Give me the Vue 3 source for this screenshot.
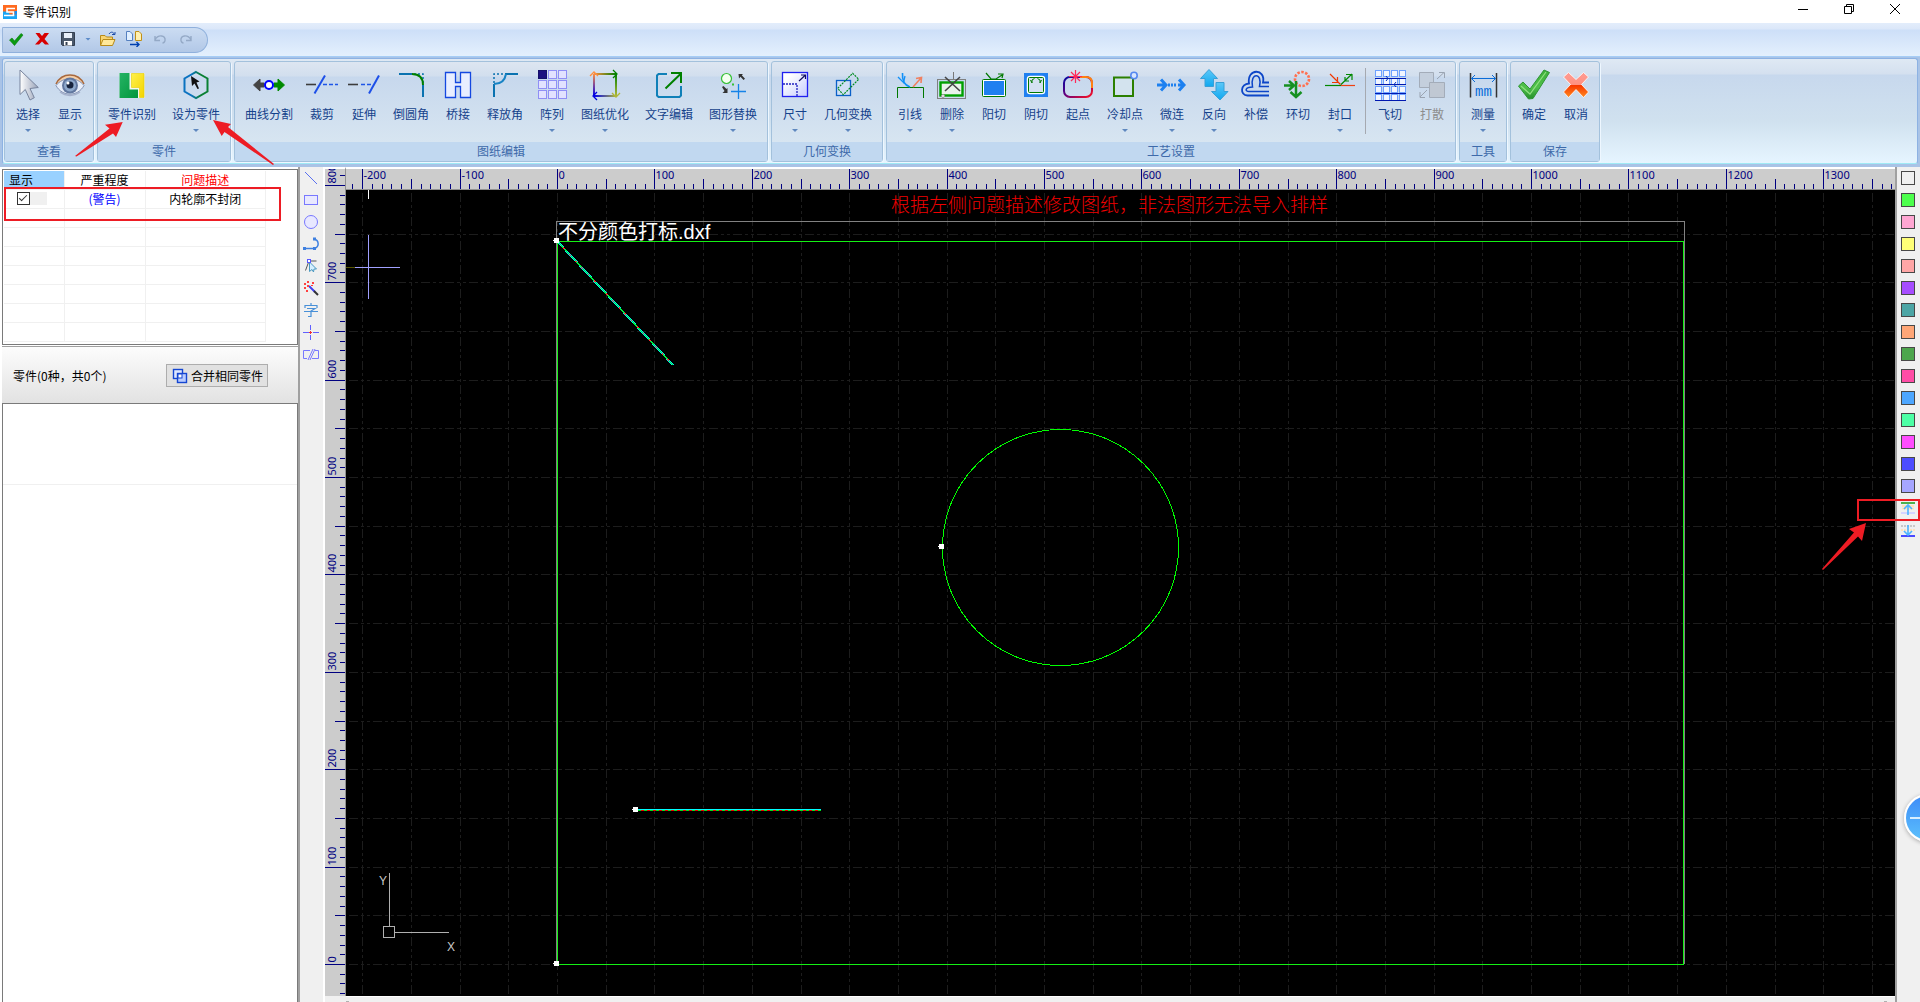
<template>
  <div class="app">
    <header class="title-bar">
      <svg class="logo" viewBox="0 0 14 14">
        <rect width="14" height="14" fill="#ff6a1f" />
        <path d="M0 6.500L5 6.500L7 9.500H14V14H0z" fill="#19a5f5" />
        <path d="M12 3.500H4V7H10.500V10.500H1" fill="none" stroke="#fff" stroke-width="1.600" />
        <path d="M11.500 6H14V9.500H11.500z" fill="#1b8df0" />
      </svg>
      <h1>零件识别</h1>
      <div class="window-buttons">
        <button aria-label="最小化">
          <svg viewBox="0 0 12 12"><path d="M1 6.500H11" /></svg>
        </button>
        <button aria-label="还原">
          <svg viewBox="0 0 12 12"><path d="M1.500 3.500H8.500V10.500H1.500zM3.500 3.500V1.500H10.500V8.500H8.500" /></svg>
        </button>
        <button aria-label="关闭">
          <svg viewBox="0 0 12 12"><path d="M1 1L11 11M11 1L1 11" /></svg>
        </button>
      </div>
    </header>

    <div class="quick-bar">
      <div class="quick-pill">
        <button
          v-for="q in quickItems"
          :key="q.name"
          :class="{ narrow: q.name === 'more' }"
          :aria-label="q.label"
        >
          <svg viewBox="0 0 16 16" v-html="q.icon"></svg>
        </button>
      </div>
    </div>

    <nav class="ribbon">
      <div class="ribbon-inner">
        <section v-for="g in groups" :key="g.title" class="group">
          <div class="group-body">
            <template v-for="b in g.items" :key="b.t">
              <span v-if="b.sep" class="separator"></span>
              <button class="tool" :class="'len' + b.t.length" :disabled="b.off">
                <svg class="tool-icon" viewBox="0 0 32 32" v-html="icons[b.t]"></svg>
                <span class="tool-label">{{ b.t }}</span>
                <i v-if="b.menu" class="caret"></i>
              </button>
            </template>
          </div>
          <h2>{{ g.title }}</h2>
        </section>
      </div>
    </nav>

    <main class="workspace">
      <aside class="side">
        <div class="issues">
          <table>
            <thead>
              <tr>
                <th class="col-show">显示</th>
                <th class="col-level">严重程度</th>
                <th class="col-desc">问题描述</th>
              </tr>
            </thead>
            <tbody>
              <tr>
                <td><span class="check-cell"><input v-model="shown" type="checkbox" aria-label="显示" /></span></td>
                <td class="level">(警告)</td>
                <td>内轮廓不封闭</td>
              </tr>
              <tr v-for="n in 7" :key="n"><td></td><td></td><td></td></tr>
            </tbody>
          </table>
        </div>
        <div class="parts-bar">
          <span>零件(0种，共0个)</span>
          <button class="merge">
            <svg viewBox="0 0 16 16">
              <rect x="1.500" y="1.500" width="9" height="9" fill="#dfe8ff" stroke="#1446d2" stroke-width="1.400" />
              <rect x="5.500" y="5.500" width="9" height="9" fill="#b9ccff" stroke="#1446d2" stroke-width="1.400" />
              <rect x="6" y="6" width="4" height="4" fill="#fff" stroke="#1446d2" />
            </svg>
            合并相同零件
          </button>
        </div>
        <div class="parts-list"><div class="parts-row"></div></div>
      </aside>

      <div class="draw-tools">
        <button v-for="d in drawTools" :key="d.label" :aria-label="d.label">
          <svg viewBox="0 0 16 16" v-html="d.icon"></svg>
        </button>
      </div>

      <svg class="ruler-v">
        <path :d="vTicks" />
        <text v-for="v in vLabels" :key="v.n" :transform="`translate(11 ${v.p - 2}) rotate(-90)`">{{ v.n }}</text>
      </svg>

      <div class="canvas-col">
        <svg class="ruler-h">
          <path :d="hTicks" />
          <text v-for="h in hLabels" :key="h.n" :x="h.p + 1" y="10">{{ h.n }}</text>
        </svg>
        <svg class="canvas">
          <path class="grid" :d="gridLines" />
          <path d="M22.500 0V9" stroke="#fff" />
          <path d="M0 77.500H9" stroke="#555500" />
          <path d="M9 77.500H54M22.500 45V109" stroke="#a0a0ff" />
          <text class="hint" x="545" y="22">根据左侧问题描述修改图纸，非法图形无法导入排样</text>
          <g class="drawing" transform="translate(211 774)">
            <path d="M-.5 .5V-742.500H1127.500V0" stroke="#828282" />
            <path d="M.5 .5V-722.500H1126.500V-.5M0 .5H1127" stroke="#14f014" />
            <text class="file-name" x="1" y="-725">不分颜色打标.dxf</text>
            <circle cx="503.500" cy="-416.500" r="118" stroke="#0f0" />
            <path d="M0 -723L116 -599" stroke="#00e8e8" stroke-width="2" />
            <path d="M0 -723L116 -599" stroke="#00f040" />
            <path d="M0 -723L116 -599" stroke="#ff3030" stroke-dasharray="2 7" />
            <path d="M78 -154.500H264" stroke="#00ffff" />
            <path d="M78 -153.500H264" stroke="#00e020" />
            <path d="M78 -153.500H264" stroke="#f00000" stroke-dasharray="3 3" />
            <g fill="#fff">
              <circle cx="-.5" cy="-723.500" r="3" />
              <circle cx="-.5" cy="-.5" r="3" />
              <circle cx="78.500" cy="-154.500" r="3" />
              <circle cx="384.500" cy="-417.500" r="3" />
            </g>
          </g>
          <g class="axes">
            <rect x="37.500" y="736.500" width="11" height="11" />
            <path d="M43.500 683V737M49 742.500H103" />
            <text x="33" y="695">Y</text>
            <text x="101" y="761">X</text>
          </g>
        </svg>
        <div class="scroll-strip"><i></i><i></i></div>
      </div>

      <div class="palette">
        <button
          v-for="c in colors"
          :key="c"
          class="swatch"
          :style="{ background: c }"
          :aria-label="c"
        ></button>
        <button class="move" aria-label="置顶">
          <svg viewBox="0 0 16 16">
            <path d="M2 5h12M2 7.500h12" stroke="#ffe3bd" stroke-width="2" />
            <path d="M1 12h14" stroke="#d4d4ff" stroke-width="2" />
            <path d="M1 2h14" stroke="#4fb04f" stroke-width="2" />
            <path d="M8 14V4M4 8L8 4L12 8" fill="none" stroke="#4db5ff" stroke-width="1.600" />
          </svg>
        </button>
        <button class="move" aria-label="置底">
          <svg viewBox="0 0 16 16">
            <path d="M1 3h14" stroke="#c8c8c8" stroke-width="2" stroke-dasharray="2 1" />
            <path d="M1 7h14" stroke="#ffe3bd" stroke-width="2" stroke-dasharray="2 1" />
            <path d="M1 13h14" stroke="#4a4aff" stroke-width="2" />
            <path d="M8 2V12M4 8L8 12L12 8" fill="none" stroke="#4db5ff" stroke-width="1.600" />
          </svg>
        </button>
      </div>
    </main>

    <svg class="marks">
      <rect x="5" y="188" width="275" height="32" fill="none" stroke="#ed1c24" stroke-width="2" />
      <path d="M122.700 122L105 124.700L109.500 128.500L75 156L76.500 156.500L113 133.500L116 137z" />
      <path d="M213 120L231 124L228 127L274 164L273 165L224.500 132L221.700 136z" />
    </svg>
    <svg class="marks-right" viewBox="0 0 100 80">
      <rect x="38" y="10" width="61" height="20" fill="none" stroke="#ed1c24" stroke-width="2" />
      <path d="M46 33L29 39L34 42.500L2 79L3 80L38 46.500L42 51z" />
    </svg>
    <button class="bubble" aria-label="展开"></button>
  </div>
</template>

<script setup>
import { ref } from 'vue'

const shown = ref(true)

const groups = [
  { title: '查看', items: [{ t: '选择', menu: true }, { t: '显示', menu: true }] },
  { title: '零件', items: [{ t: '零件识别' }, { t: '设为零件', menu: true }] },
  {
    title: '图纸编辑',
    items: [
      { t: '曲线分割' }, { t: '裁剪' }, { t: '延伸' }, { t: '倒圆角' }, { t: '桥接' }, { t: '释放角' },
      { t: '阵列', menu: true }, { t: '图纸优化', menu: true }, { t: '文字编辑' }, { t: '图形替换', menu: true }
    ]
  },
  { title: '几何变换', items: [{ t: '尺寸', menu: true }, { t: '几何变换', menu: true }] },
  {
    title: '工艺设置',
    items: [
      { t: '引线', menu: true }, { t: '删除', menu: true }, { t: '阳切' }, { t: '阴切' }, { t: '起点' },
      { t: '冷却点', menu: true }, { t: '微连', menu: true }, { t: '反向', menu: true }, { t: '补偿' },
      { t: '环切' }, { t: '封口', menu: true }, { t: '飞切', menu: true, sep: true }, { t: '打散', off: true }
    ]
  },
  { title: '工具', items: [{ t: '测量', menu: true }] },
  { title: '保存', items: [{ t: '确定' }, { t: '取消' }] }
]

// cells of the array icon, 3 x 3
let arrayCells = ''
for (let i = 0; i < 9; i++) {
  const x = 2.5 + (i % 3) * 10
  const y = 1.5 + Math.floor(i / 3) * 10
  arrayCells += `<rect x="${x}" y="${y}" width="8" height="8" fill="${i ? '#e2e2ff' : '#1c1080'}" stroke="${i ? '#8f8ff5' : '#15106a'}"/>`
}

// cells of the fly-cut icon, 4 x 4
let flyCells = ''
for (let i = 0; i < 16; i++) {
  const x = 1.5 + (i % 4) * 8
  const y = 1.5 + Math.floor(i / 4) * 8
  flyCells += `<rect x="${x}" y="${y}" width="6" height="6" fill="#f2f6ff" stroke="#6ea2ff"/>`
}

const icons = {
  选择: '<defs><linearGradient id="cur"><stop offset="0" stop-color="#fff"/><stop offset="1" stop-color="#98a2b8"/></linearGradient></defs><path d="M8 1V25.500L13.300 20.500L18 31L22.300 28.700L18 19.500L26.300 18.500z" fill="url(#cur)" stroke="#77839c"/>',
  显示: '<path d="M2 15C8 3 24 3 30 15" fill="#f5cfa8" stroke="#a8683c" stroke-width="1.500"/><path d="M2 16.500C9 7.500 23 7.500 30 16.500C24 28 8 28 2 16.500z" fill="#e8eefa" stroke="#8292b2"/><circle cx="16" cy="16.500" r="8" fill="#61779f"/><circle cx="16" cy="16.500" r="6" fill="#8ea8cb"/><circle cx="16" cy="16" r="3.500" fill="#17233d"/><circle cx="14" cy="14" r="1.500" fill="#fff"/><path d="M6 23C12 27.500 20 27.500 26 23" fill="none" stroke="#a5b0cb" stroke-width="1.500"/>',
  零件识别: '<defs><linearGradient id="grn" x2="1" y2="1"><stop offset="0" stop-color="#25b364"/><stop offset="1" stop-color="#00963c"/></linearGradient><linearGradient id="yel" y2="1"><stop offset="0" stop-color="#fff04a"/><stop offset="1" stop-color="#f3d400"/></linearGradient></defs><path d="M3.500 4H28.500V29H3.500z" fill="#f4f8ee"/><path d="M3.500 4H13.500V20.500H22V29H3.500z" fill="url(#grn)"/><path d="M15.500 4.500H28V28.500H23.500V18.500H15.500z" fill="url(#yel)" stroke="#e5cf00" stroke-width=".6"/>',
  设为零件: '<defs><linearGradient id="hex"><stop offset=".3" stop-color="#0a72c0"/><stop offset=".7" stop-color="#0a8032"/></linearGradient></defs><path d="M16 3L27.500 9.500V22.500L16 29L4.500 22.500V9.500z" fill="none" stroke="url(#hex)" stroke-width="2"/><path d="M11 7L12 17L14.500 14.500L17.500 20L19 19.500L16.500 13.500L19.500 12.500z" fill="#111"/>',
  曲线分割: '<path d="M7 10L.500 16L7 22V18H11V14H7z" fill="#454545" stroke="#454545" stroke-linejoin="round"/><path d="M25 10L31.500 16L25 22V18H21V14H25z" fill="#008a00" stroke="#008a00" stroke-linejoin="round"/><circle cx="16" cy="16" r="4" fill="#fff" stroke="#00f" stroke-width="2"/>',
  裁剪: '<path d="M0 15.500H10" stroke="#3c3c3c" stroke-width="1.600"/><path d="M17 15.500H32" stroke="#1d55e8" stroke-width="1.600" stroke-dasharray="4 2"/><path d="M19 6.500L8.500 24.500" stroke="#1d4fe8" stroke-width="2"/>',
  延伸: '<path d="M0 15.500H10" stroke="#3c3c3c" stroke-width="1.600"/><path d="M13 15.500H24" stroke="#1d55e8" stroke-width="1.600" stroke-dasharray="4 2"/><path d="M31 6.500L21 24.500" stroke="#1d4fe8" stroke-width="2"/>',
  倒圆角: '<path d="M4 5H17M28 16V28" stroke="#0a72b0" stroke-width="2"/><path d="M19 5H28V15" fill="none" stroke="#0a72b0" stroke-width="1.500" stroke-dasharray="2 2"/><path d="M17 5C24 5 28 9 28 16" fill="none" stroke="#008000" stroke-width="2"/>',
  桥接: '<path d="M3.500 3.500H13.500V13.500H18.500V3.500H28.500V28.500H18.500V17.500H13.500V28.500H3.500z" fill="#e8eeff" stroke="#1448e0" stroke-width="1.300"/>',
  释放角: '<path d="M16 5H29M5 15V28" stroke="#0a72b0" stroke-width="2"/><path d="M5 14V5H16" fill="none" stroke="#0a72b0" stroke-width="1.500" stroke-dasharray="2 2"/><path d="M17 5C16 11 12 15 5 15" fill="none" stroke="#1783c4" stroke-width="2"/>',
  阵列: arrayCells,
  图纸优化: '<defs><linearGradient id="oa"><stop offset="0" stop-color="#ff9040"/><stop offset="1" stop-color="#008000"/></linearGradient><linearGradient id="ob" x2="0" y2="1"><stop offset="0" stop-color="#008000"/><stop offset="1" stop-color="#b0b838"/></linearGradient><linearGradient id="oc"><stop offset="0" stop-color="#0000f0"/><stop offset="1" stop-color="#b0b838"/></linearGradient><linearGradient id="od" x2="0" y2="1"><stop offset="0" stop-color="#ff9040"/><stop offset="1" stop-color="#0000f0"/></linearGradient></defs><rect x="5" y="4" width="22" height="2" fill="url(#oa)"/><rect x="26" y="5" width="2" height="22" fill="url(#ob)"/><rect x="5" y="26" width="22" height="2" fill="url(#oc)"/><rect x="4" y="5" width="2" height="22" fill="url(#od)"/><g fill="none" stroke-width="1.300"><path d="M1 7L5 3L9 7" stroke="#ff9040"/><path d="M24 1L28 5L24 9" stroke="#008000"/><path d="M23 24L27 28L31 24" stroke="#b0b838"/><path d="M8 23L4 27L8 31" stroke="#0000e0"/></g>',
  文字编辑: '<path d="M14 5H5.500L4 6.500V26.500L5.500 28H26.500L28 26.500V17" fill="none" stroke="#1080b8" stroke-width="2"/><path d="M12.500 19.500L28 4.500M18 4H28V14" fill="none" stroke="#008000" stroke-width="2"/>',
  图形替换: '<circle cx="9.500" cy="9.500" r="5" fill="#f4fff0" stroke="#35c035" stroke-width="1.200"/><path d="M21.500 5H26L24.800 6.300L28 9.700L26.500 11L23.500 7.700L22 9.500z" fill="#333"/><path d="M5 18L6.500 17L9.500 20L10.500 19V24H5.500L7.500 22z" fill="#333"/><path d="M14 22.500H29M21.500 15V30" stroke="#1583e8" stroke-width="1.300"/><path d="M15 14.500h2v2h-2z" fill="#35c035"/>',
  尺寸: '<defs><linearGradient id="dim" x2="1" y2="1"><stop offset=".2" stop-color="#fff"/><stop offset="1" stop-color="#c5ccff"/></linearGradient></defs><rect x="3.500" y="3.500" width="25" height="24" fill="url(#dim)" stroke="#2020f0" stroke-width="1.300"/><path d="M4 15H18V27" fill="none" stroke="#2020c0" stroke-width="1.300" stroke-dasharray="2 1"/><path d="M20 12L26.500 6M22 6H26.500V10" fill="none" stroke="#101060" stroke-width="1.200"/>',
  几何变换: '<rect x="4.500" y="11.500" width="14" height="15" fill="#cfe0f5" stroke="#0a60c8" stroke-width="1.300"/><path d="M5.700 19.300L20.700 4.300L26.700 10.300L11.300 25.700z" fill="none" stroke="#008a20" stroke-width="1.200" stroke-dasharray="2 1"/>',
  引线: '<path d="M3.500 29V18.500H29.500V29" fill="none" stroke="#007800"/><path d="M8.500 4C8 11 10 16 16 18" fill="none" stroke="#1090f8" stroke-width="1.600"/><path d="M4 8L9.500 13.500L11 7" fill="none" stroke="#1090f8" stroke-width="1.300"/><path d="M19 18L27 9M22 9.500L27.500 8.500L27 14" fill="none" stroke="#f08060" stroke-width="1.600"/>',
  删除: '<rect x="1.500" y="10.500" width="28" height="19" fill="none" stroke="#808080"/><rect x="4.500" y="13.500" width="22" height="13" fill="#e9f3ea" stroke="#00a000" stroke-width="2.400"/><path d="M9 8L24 22M24 8L9 22" stroke="#444" stroke-width="1.600"/><path d="M17.500 3V10" stroke="#777"/><circle cx="7" cy="27" r="1.500" fill="#fff" stroke="#999"/>',
  阳切: '<rect x="4.500" y="10.500" width="23" height="17" rx="1" fill="#fff" stroke="#007800"/><rect x="6" y="12" width="20" height="14" fill="#2080f0"/><path d="M8 4L13 10H18L24 6M20 5L25 5L24 9" fill="none" stroke="#007800" stroke-width="1.200"/>',
  阴切: '<rect x="4" y="4" width="24" height="24" fill="#2080f0"/><rect x="8" y="8" width="16" height="16" rx="2" fill="#d4e1f2" stroke="#fff" stroke-width="2.500"/><rect x="8.500" y="8.500" width="15" height="15" rx="1" fill="#d4e1f2" stroke="#007800"/><path d="M12 14V11L14.500 9.500M17.500 9.500L20 11V14M10.500 11L12 14M21.500 11L20 14" fill="none" stroke="#007800"/>',
  起点: '<defs><linearGradient id="sta" x2="1" y2="1"><stop offset="0" stop-color="#0808a0"/><stop offset=".45" stop-color="#600080"/><stop offset="1" stop-color="#ff1020"/></linearGradient></defs><rect x="2" y="8" width="28" height="20" rx="6" fill="none" stroke="url(#sta)" stroke-width="2"/><path d="M18 8H24Q30 8 30 14V19" fill="none" stroke="#ff8010" stroke-width="2"/><path d="M13.500 1V14M7 7.500H20M9 3L18 12M18 3L9 12" stroke="#ff2858" stroke-width="1.200"/>',
  冷却点: '<rect x="5" y="8.500" width="19" height="18.500" fill="#d3e3ee" stroke="#2c8000" stroke-width="2"/><circle cx="25" cy="6.500" r="3.200" fill="#d8e6ff" stroke="#5588f0" stroke-width="1.600"/>',
  微连: '<path d="M1 16H9M5 10.500L10 16L5 21.500" fill="none" stroke="#1c80f0" stroke-width="3"/><path d="M12 16H21" stroke="#1c80f0" stroke-width="3" stroke-dasharray="2 1"/><path d="M22 16H28M23 10.500L28 16L23 21.500" fill="none" stroke="#1c80f0" stroke-width="3"/>',
  反向: '<defs><linearGradient id="rev" y2="1" x2="0"><stop offset="0" stop-color="#5cc8f8"/><stop offset="1" stop-color="#10a8f0"/></linearGradient></defs><path d="M11 .5L19.500 9.500H15.500V17.500H7V9.500H2.500z" fill="url(#rev)" stroke="#38a0d8"/><path d="M22 31L30 22.500H26V13.500H18V22.500H13.500z" fill="url(#rev)" stroke="#38a0d8"/>',
  补偿: '<path d="M29 26.500H7.500C-.5 26 .5 15 9 14.500C6.500 -1 26 -1 23 13.500H29" fill="none" stroke="#0d46c8" stroke-width="1.800"/><path d="M29 22.500H9C4.500 22.500 5 18 12.500 18C9.500 3 23 3 19.500 17.500H29" fill="none" stroke="#0d46c8" stroke-width="1.500"/>',
  环切: '<circle cx="20" cy="10" r="7" fill="none" stroke="#ff7050" stroke-width="2.600" stroke-dasharray="2.500 1.500"/><path d="M2 16.500H11M7 12L12 16.500L7 21" fill="none" stroke="#159020" stroke-width="2.500"/><path d="M14 12V28M8.500 23L14 28L19.500 23" fill="none" stroke="#159020" stroke-width="2.500"/>',
  封口: '<path d="M1 16.500H17" stroke="#008800" stroke-width="1.200"/><path d="M17 16.500H31" stroke="#f04010" stroke-width="1.200"/><path d="M6 5L16.500 15.500M8 13.500H13.500V8" fill="none" stroke="#f03800" stroke-width="1.200"/><path d="M17 15.500L28 5M22 5.500H28V11M21 8L21 12L25 12" fill="none" stroke="#008800" stroke-width="1.200"/>',
  飞切: flyCells + '<path d="M1 9.500H32M1 15.500H32M1 24.500H32M1 31.500H32" stroke="#0018b0"/><path d="M12 7L14 9.500L12 12M22 13L20 15.500L22 18" fill="none" stroke="#0030c0"/>',
  打散: '<path d="M3.500 3.500H17.500V18.500H3.500z" fill="#c4cfdd" stroke="#a3acb9"/><path d="M13.500 13.500H28.500V28.500H13.500z" fill="#c0c8d3" stroke="#a3acb9"/><path d="M21 10L28 3.500M23 3.500H28.500V9M11 21L4 28M4 23V28.500H9" fill="none" stroke="#9aa4b2"/>',
  测量: '<path d="M3.500 4V28.500M29.500 4V28.500" stroke="#333" stroke-width="1.500"/><path d="M4.500 9.500H28.500M8 6L4.500 9.500L8 13M25 6L28.500 9.500L25 13" fill="none" stroke="#0a6cd8"/><text x="8" y="27" font-family="Liberation Mono, monospace" font-size="14" fill="#0a6cd8">mm</text>',
  确定: '<defs><linearGradient id="okg" y2="1" x2="0"><stop offset="0" stop-color="#3fae3a"/><stop offset=".6" stop-color="#4fc04a"/><stop offset="1" stop-color="#26902c"/></linearGradient></defs><path d="M.5 17L5 13L12 20L26 1L31.500 3.500L15 29.500L10.500 30z" fill="url(#okg)" stroke="#2f9634" stroke-linejoin="round"/><path d="M3 17L12 25L28 3" fill="none" stroke="#90e080" stroke-width="1.200"/>',
  取消: '<defs><linearGradient id="nog" y2="1" x2="0"><stop offset=".1" stop-color="#ff9a90"/><stop offset=".48" stop-color="#ff9080"/><stop offset=".52" stop-color="#f83800"/><stop offset="1" stop-color="#ff8a20"/></linearGradient></defs><path d="M3.500 8L8.500 3.500L16 10.500L23.500 3.500L28.500 8L21.500 15.500L28.500 23L23.500 28.500L16 20.500L8.500 28.500L3.500 23L10.500 15.500z" fill="url(#nog)" stroke="#fff" stroke-width=".8"/>'
}

const quickItems = [
  { name: 'ok', label: '确定', icon: '<path d="M1.500 9L4 7L6.500 10L13 2.500L15 4L6.500 14.500z" fill="#0a9a10" stroke="#087a0c" stroke-width=".6"/>' },
  { name: 'no', label: '取消', icon: '<path d="M1.500 2H5.500L8 5L10.500 2H15L10.500 8L15 13.500H11L8 10.500L5 13.500H1L6 8z" fill="#d80000"/>' },
  { name: 'save', label: '保存', icon: '<path d="M1.500 1.500H14.500V14.500H2.500L1.500 13.500z" fill="#4a586b" stroke="#333f50"/><path d="M4 2H12V7H4z" fill="#e8f0fa"/><path d="M4 10H12V14.500H4z" fill="#fff"/><path d="M5.500 11H7.500V14H5.500z" fill="#333f50"/>' },
  { name: 'more', label: '更多', icon: '<path d="M3 6H13L8 11z" fill="#5b8ac8"/>' },
  { name: 'open', label: '打开', icon: '<path d="M.5 14V4.500H5L6.500 6H12.500V8" fill="#f8d470" stroke="#b88a18"/><path d="M.5 14.500L3 8.500H15L12.500 14.500z" fill="#ffe89a" stroke="#b88a18"/><path d="M9 3C11 0 14 1 14.500 4M12 3.500H15V1" fill="none" stroke="#1a4aa8"/>' },
  { name: 'convert', label: '转换', icon: '<path d="M.5 .5H4L6.500 3V9.500H.5z" fill="#e0efff" stroke="#5580c0"/><path d="M9.500 .5H13L15.500 3V9.500H9.500z" fill="#fff0b0" stroke="#c09018"/><path d="M4 13.500H13M10.500 11L13 13.500L10.500 16" fill="none" stroke="#0040b0" stroke-width="1.400"/>' },
  { name: 'undo', label: '撤销', icon: '<path d="M3 9C6 3 14 4 13 9.500C12.500 11.500 11 12 10.500 12M3 5V9.500H8" fill="none" stroke="#94a9c6" stroke-width="1.400"/>' },
  { name: 'redo', label: '重做', icon: '<path d="M13 9C10 3 2 4 3 9.500C3.500 11.500 5 12 5.500 12M13 5V9.500H8" fill="none" stroke="#94a9c6" stroke-width="1.400"/>' }
]

const drawTools = [
  { label: '直线', icon: '<path d="M2 2L14 14" stroke="#5a70f0"/>' },
  { label: '矩形', icon: '<rect x="1.500" y="3.500" width="13" height="9" fill="#e8e8ff" stroke="#7878ff"/>' },
  { label: '圆', icon: '<circle cx="8" cy="8" r="6.500" fill="#e8e8ff" stroke="#7878ff"/>' },
  { label: '多段线', icon: '<path d="M1 12.500H11C17 11 16 4 11 3" fill="none" stroke="#3f80e0" stroke-width="1.500"/><path d="M0 11h3v3H0zM10 1.500h3v3h-3zM10 11h3v3h-3z" fill="#3f80e0"/>' },
  { label: '节点', icon: '<path d="M2.500 12.500L6 3H13.500" fill="none" stroke="#555"/><path d="M6.500 4V13.500L9 11.500L10.500 14L11 11H13.500z" fill="#d5efff" stroke="#4a98c0"/><rect x="4.500" y="1.500" width="3" height="3" fill="#fff" stroke="#5858ff"/>' },
  { label: '魔棒', icon: '<path d="M6 6L12 12" stroke="#4040f0" stroke-width="2"/><path d="M11 11L15 15" stroke="#333" stroke-width="2"/><path d="M1 3h2v2H1zM4 1h2v2H4zM9 2h2v2H9zM1 7h2v2H1zM3 10h2v2H3zM8 5h2v1H8zM4 5h2v2H4z" fill="#ff4040"/>' },
  { label: '文字', icon: '<path d="M8 1V3M2 6V3.500H14V6M4 6.500H12L8 9V14.500H5M1 9.500H15" fill="none" stroke="#4890d8" stroke-width="1.200"/>' },
  { label: '点', icon: '<path d="M0 8.500H6M10 8.500H16M7.500 1V6M7.500 11V16" stroke="#6060ff"/><path d="M6 8.500H9M7.500 7V10" stroke="#f03030"/>' },
  { label: '打断', icon: '<path d="M7 4.500H.5V12.500H4M9 12.500H15.500V4.500H12M5 14L10 3M7 14L12 3" fill="none" stroke="#7878ff"/>' }
]

const colors = [
  '#f0f0f0', '#4dff4d', '#ffa6d2', '#ffff77', '#ffa6a6', '#a64dff', '#4da6a6', '#ffa677',
  '#4da64d', '#ff4da6', '#4da6ff', '#4dffa6', '#ff4dff', '#4d4dff', '#a6a6ff'
]

// ruler scale: pixels per millimetre, and where zero lies on each ruler
const scale = 0.974
const zeroX = 211
const zeroY = 774
const rulerH = 21

// space left for the drawing next to the panels and below the ribbon
const viewW = window.innerWidth - 371
const viewH = window.innerHeight - 196

const toX = (v) => Math.round(zeroX + v * scale) + 0.5
const toY = (v) => Math.round(zeroY - v * scale) + 0.5

function tickLength(v) {
  if (v % 100 === 0) return 20
  return v % 50 === 0 ? 10 : 5
}

let hTicks = ''
let vTicks = ''
let gridLines = ''
const hLabels = []
const vLabels = []

for (let v = -210; toX(v) < viewW; v += 10) {
  hTicks += `M${toX(v)} 20V${20 - tickLength(v)}`
  if (v % 100 === 0 && toX(v) < viewW - 32) hLabels.push({ n: v, p: toX(v) })
  if (v % 50 === 0) gridLines += `M${toX(v)} 3V${viewH}`
}
for (let v = 810; toY(v) < viewH; v -= 10) {
  const y = toY(v) + rulerH
  vTicks += `M20 ${y}H${20 - tickLength(v)}`
  if (v % 100 === 0) vLabels.push({ n: v, p: y })
  if (v % 50 === 0) gridLines += `M3 ${toY(v)}H${viewW}`
}
</script>

<style>
body {
  overflow: hidden;
}
</style>

<style scoped>
.app {
  position: relative;
  display: flex;
  flex-direction: column;
  height: 100vh;
  overflow: hidden;
  background: #fff;
  font-family: "Noto Sans CJK SC", sans-serif;
  font-size: 12px;
  line-height: 16px;
  color: #000;
}

button {
  padding: 0;
  border: none;
  background: transparent;
  font: inherit;
  color: inherit;
}

h1,
h2 {
  margin: 0;
  font-size: 12px;
  font-weight: normal;
}

.title-bar {
  display: flex;
  align-items: center;
  gap: 6px;
  height: 23px;
  padding: 0 2px 0 3px;
}

.logo {
  width: 14px;
  height: 14px;
}

.window-buttons {
  display: flex;
  margin-left: auto;
}

.window-buttons button {
  width: 46px;
  height: 23px;
  padding-bottom: 3px;
}

.window-buttons svg {
  width: 12px;
  height: 12px;
  fill: none;
  stroke: #000;
}

/* quick access */
.quick-bar {
  height: 33px;
  flex: none;
  box-sizing: border-box;
  padding: 4px 2px;
  background: linear-gradient(#e3edfb 0, #dbe7f9 6px, #cddff8 7px, #e4f0fd 100%);
}

.quick-pill {
  display: inline-flex;
  align-items: center;
  box-sizing: border-box;
  height: 26px;
  padding-right: 8px;
  border: 1px solid #8fb0dc;
  border-left-color: #9ab6dc;
  border-radius: 0 13px 13px 0;
  background: linear-gradient(#cbdcf2, #b2c8e7);
}

.quick-pill button {
  width: 26px;
  height: 20px;
}

.quick-pill .narrow {
  width: 14px;
}

.quick-pill svg {
  width: 16px;
  height: 16px;
}

.quick-pill .narrow svg {
  width: 8px;
}

/* ribbon */
.ribbon {
  flex: none;
  padding: 1px 2px 3px;
  border-top: 1px solid #a6cdf6;
  background: #a9c3e6;
}

.ribbon-inner {
  display: flex;
  gap: 3px;
  box-sizing: border-box;
  height: 106px;
  padding: 2px 1px 1px;
  border: 1px solid #8db2e3;
  border-bottom-color: #9feaf5;
  border-radius: 3px;
  background: linear-gradient(#dfe9f4 0, #d4e0ef 15px, #c7d8ed 16px, #d0e1ef 60%, #e6f5ff 100%);
}

.group {
  display: flex;
  flex-direction: column;
  box-sizing: border-box;
  border: 1px solid #a3c1dc;
  border-radius: 3px;
  box-shadow: 1px 1px 0 #eef7ff;
  background: linear-gradient(#dde6f1 0, #d2dfee 14px, #c7d8ed 15px, #d7e5f1 80px);
}

.group h2 {
  height: 19px;
  line-height: 18px;
  text-align: center;
  color: #3e6aaa;
  background: #c1d8f0;
}

.group-body {
  display: flex;
  flex: 1;
  padding: 0 2px;
}

.tool {
  display: flex;
  flex-direction: column;
  align-items: center;
  padding-top: 7px;
  width: 42px;
  color: #15428b;
}

.tool.len3 {
  width: 52px;
}

.tool.len4 {
  width: 64px;
}

.tool:disabled {
  color: #8d8d8d;
}

.tool-icon {
  width: 32px;
  height: 32px;
  margin-bottom: 5px;
  overflow: visible;
}

.tool-label {
  white-space: nowrap;
}

.caret {
  margin-top: 7px;
  border: 3px solid transparent;
  border-top-color: #5f88bf;
  border-bottom: none;
}

.separator {
  width: 1px;
  height: 66px;
  margin: 6px 3px 0 4px;
  background: #a5a9b0;
}

/* left panel */
.workspace {
  display: flex;
  flex: 1;
  min-height: 0;
  background: #f0f0f0;
}

.side {
  display: flex;
  flex-direction: column;
  flex: none;
  box-sizing: border-box;
  width: 300px;
  border-right: 2px solid #a0a0a0;
  padding: 2px 0 0 2px;
  background: #fff;
}

.issues {
  box-sizing: border-box;
  height: 176px;
  padding: 1px;
  border: 1px solid #7a7a7a;
}

table {
  width: 262px;
  border-collapse: collapse;
  table-layout: fixed;
  text-align: center;
}

th,
td {
  box-sizing: border-box;
  height: 19px;
  padding: 0;
  border-right: 1px solid #f0f0f0;
  border-bottom: 1px solid #f0f0f0;
  font-weight: normal;
}

th {
  height: 18px;
}

.col-show {
  width: 60px;
  padding-left: 5px;
  text-align: left;
  background: #99d1ff;
}

.col-level {
  width: 81px;
}

.col-desc {
  color: #f00;
}

.level {
  color: #00f;
}

.check-cell {
  display: block;
  width: 30px;
  height: 13px;
  margin-left: 13px;
  background: #f0f0f0;
}

input[type="checkbox"] {
  appearance: none;
  display: block;
  box-sizing: border-box;
  width: 13px;
  height: 13px;
  margin: 0;
  border: 1px solid #333;
  background: #fff;
}

input[type="checkbox"]:checked::before {
  content: "";
  display: block;
  width: 7px;
  height: 3px;
  margin: 2px 0 0 1px;
  border: solid #333;
  border-width: 0 0 1px 1px;
  transform: rotate(-45deg);
}

.parts-bar {
  display: flex;
  align-items: center;
  justify-content: space-between;
  box-sizing: border-box;
  height: 58px;
  padding: 2px 30px 0 11px;
  border-top: 1px solid #fff;
  box-shadow: inset 0 1px 0 #a0a0a0;
  background: linear-gradient(#fdfdfd, #e2e2e2);
}

.merge {
  display: flex;
  align-items: center;
  gap: 3px;
  height: 23px;
  padding: 0 4px 0 5px;
  border: 1px solid #adadad;
  background: #e1e1e1;
  white-space: nowrap;
}

.merge svg {
  width: 16px;
  height: 16px;
}

.parts-list {
  flex: 1;
  border: 1px solid #7a7a7a;
  border-bottom: none;
}

.parts-row {
  height: 80px;
  border-bottom: 1px solid #f0f0f0;
}

/* drawing tools */
.draw-tools {
  flex: none;
  width: 23px;
  border-right: 2px solid #fff;
}

.draw-tools button {
  display: block;
  width: 22px;
  height: 22px;
}

.draw-tools svg {
  display: block;
  width: 16px;
  height: 16px;
  margin: 0 auto;
}

.ruler-v,
.ruler-h {
  flex: none;
  border-top: 2px solid #fff;
  background: #cccccc;
  font-family: "Noto Sans", sans-serif;
  font-size: 11px;
  fill: #000080;
}

.ruler-v path,
.ruler-h path {
  stroke: #000080;
}

.ruler-v {
  box-sizing: border-box;
  width: 21px;
  height: calc(100% - 6px);
  border-right: 1px solid #909090;
}

.ruler-h {
  width: 100%;
  height: 20px;
  border-bottom: 1px solid #909090;
}

.canvas-col {
  display: flex;
  flex-direction: column;
  flex: 1;
  min-width: 0;
}

.canvas {
  flex: 1;
  width: 100%;
  min-height: 0;
  background: #000;
}

.grid {
  fill: none;
  stroke: #1d1d1d;
  stroke-dasharray: 9 3 3 3 3 3;
}

.hint {
  font-size: 19px;
  font-weight: 300;
  fill: #f00000;
}

.drawing {
  fill: none;
  shape-rendering: crispEdges;
}

.file-name {
  font-family: "Liberation Sans", "Noto Sans CJK SC", sans-serif;
  font-size: 20px;
  fill: #fff;
}

.axes {
  fill: none;
  stroke: #b0b0b0;
}

.axes text {
  font-family: "Liberation Sans", sans-serif;
  font-size: 12px;
  fill: #c8c8c8;
  stroke: none;
}

.scroll-strip {
  display: flex;
  justify-content: space-between;
  align-items: flex-end;
  flex: none;
  box-sizing: border-box;
  height: 6px;
  padding: 0 8px 0 0;
  border-top: 1px solid #fff;
}

.scroll-strip i {
  width: 3px;
  height: 1px;
  background: #b0b0b0;
}

/* layer colours */
.palette {
  display: flex;
  flex-direction: column;
  align-items: center;
  gap: 8px;
  flex: none;
  box-sizing: border-box;
  width: 25px;
  padding: 4px 1px 0 0;
  border-left: 2px solid #a0a0a0;
}

.swatch {
  box-sizing: border-box;
  width: 14px;
  height: 14px;
  border: 1px solid #484848;
}

.move {
  width: 16px;
  height: 14px;
}

.move svg {
  display: block;
  width: 16px;
  height: 16px;
}

/* callouts over the page */
.marks,
.marks-right {
  position: absolute;
  top: 0;
  left: 0;
  width: 300px;
  height: 230px;
  fill: #ed1c24;
  pointer-events: none;
}

.marks-right {
  top: 490px;
  left: auto;
  right: 0;
  width: 100px;
  height: 80px;
}

.bubble {
  position: absolute;
  top: 794px;
  right: -32px;
  box-sizing: border-box;
  width: 48px;
  height: 48px;
  border: 2px solid #fff;
  border-radius: 50%;
  box-shadow: 0 1px 4px rgba(0, 0, 0, 0.3);
  background: linear-gradient(#3d8cf8, #5cc0fc);
}

.bubble::after {
  content: "";
  display: block;
  width: 30px;
  height: 2px;
  margin-left: 4px;
  background: #d8efff;
}
</style>
